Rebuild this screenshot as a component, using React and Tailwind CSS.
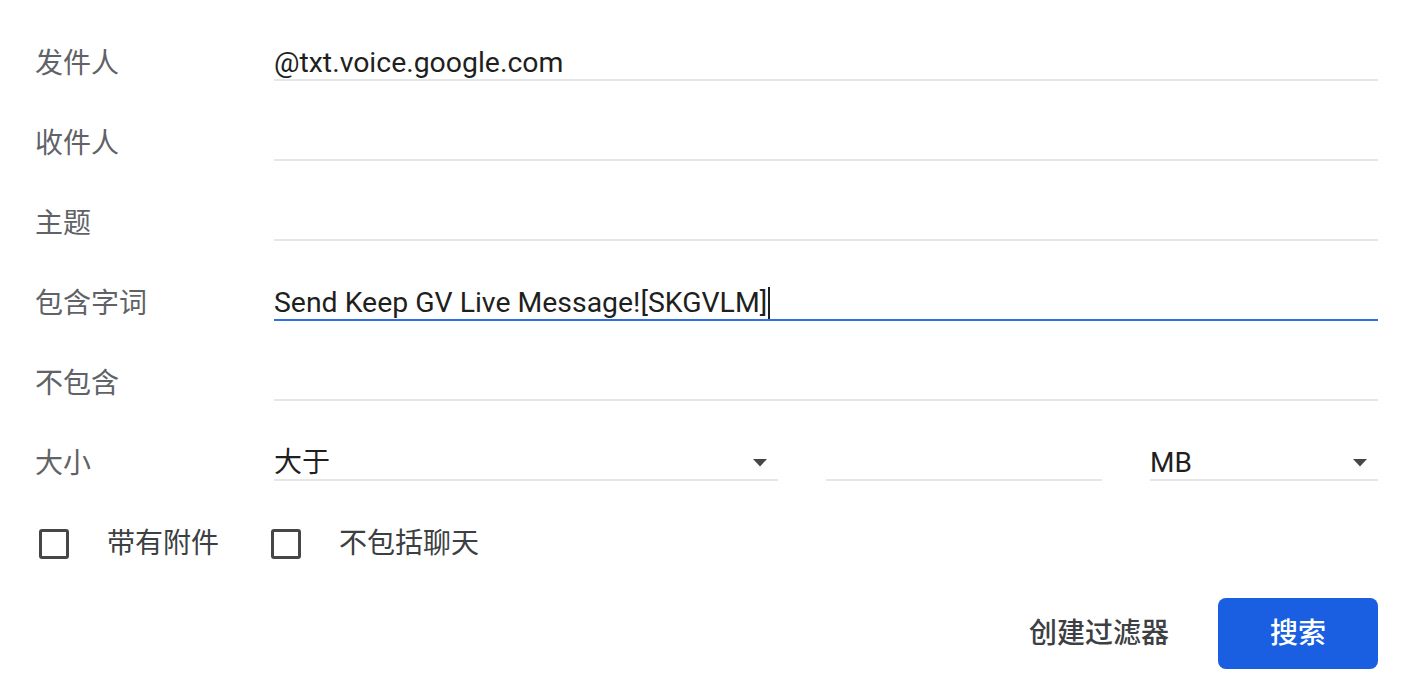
import React from 'react';

const font = { fontFamily: 'Roboto, "Noto Sans CJK SC", sans-serif' };

const Arrow = () => (
  <svg width="14" height="8" viewBox="0 0 14 8" className="shrink-0">
    <path d="M0 0 L14 0 L7 7.5 Z" fill="#444746" />
  </svg>
);

const Row = ({ label, children }) => (
  <div className="flex items-end h-[80px]">
    <div className="w-[239px] h-[34px] flex items-center text-[28px] text-[#5f6368] shrink-0">
      {label}
    </div>
    <div className="flex-1 flex items-end gap-[48px]">{children}</div>
  </div>
);

const Field = ({ value, focused, caret }) => (
  <div
    className={`flex-1 h-[34px] flex items-center border-b-2 text-[28.4px] text-[#1f1f1f] ${
      focused ? 'border-[#2f6fe4]' : 'border-[#e3e6ea]'
    }`}
  >
    <span>{value}</span>
    {caret && <span className="inline-block w-[2px] h-[32px] bg-[#1f1f1f] ml-[1px]" />}
  </div>
);

const Select = ({ value, width }) => (
  <div className={`${width} h-[34px] flex items-center justify-between pr-[11px] border-b-2 border-[#e3e6ea] text-[28px] text-[#1f1f1f] shrink-0`}>
    <span>{value}</span>
    <Arrow />
  </div>
);

const Checkbox = ({ label }) => (
  <div className="flex items-center gap-[38px]">
    <div className="w-[30px] h-[30px] border-[3px] border-[#444746] rounded-[3px]" />
    <span className="text-[28px] text-[#3c4043]">{label}</span>
  </div>
);

export default function App() {
  return (
    <div className="w-[1420px] h-[690px] bg-white pt-[1px] pl-[35px] pr-[42px]" style={font}>
      <Row label="发件人">
        <Field value="@txt.voice.google.com" />
      </Row>
      <Row label="收件人">
        <Field value="" />
      </Row>
      <Row label="主题">
        <Field value="" />
      </Row>
      <Row label="包含字词">
        <Field value="Send Keep GV Live Message![SKGVLM]" focused caret />
      </Row>
      <Row label="不包含">
        <Field value="" />
      </Row>
      <Row label="大小">
        <Select value="大于" width="w-[504px]" />
        <div className="w-[276px] h-[34px] border-b-2 border-[#e3e6ea] shrink-0" />
        <Select value="MB" width="w-[228px]" />
      </Row>

      <div className="flex items-end h-[80px]">
        <div className="w-[236px] h-[34px] flex items-center pl-[4px] shrink-0">
          <Checkbox label="带有附件" />
        </div>
        <div className="h-[34px] flex items-center">
          <Checkbox label="不包括聊天" />
        </div>
      </div>

      <div className="flex items-center justify-end gap-[49px] mt-[37px]">
        <button className="text-[28px] font-medium text-[#3c4043]">创建过滤器</button>
        <button className="w-[160px] h-[71px] rounded-[8px] bg-[#1a5fe1] text-white text-[28px] font-medium">
          搜索
        </button>
      </div>
    </div>
  );
}
